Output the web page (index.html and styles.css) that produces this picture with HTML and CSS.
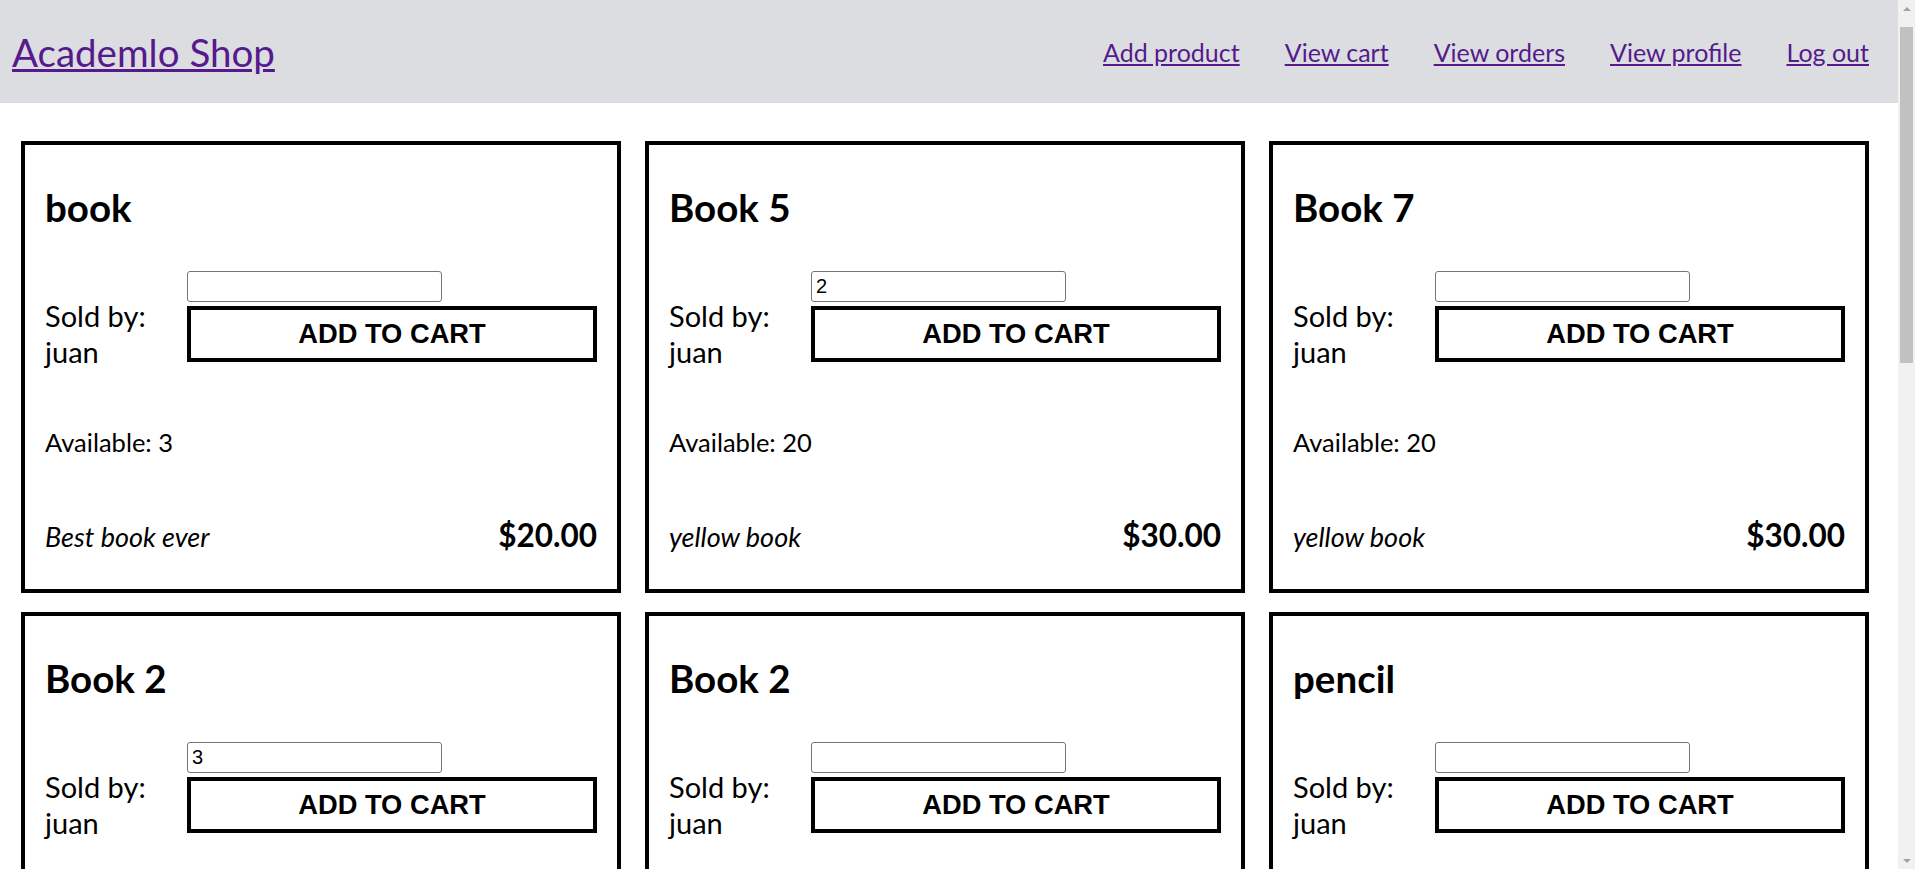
FILE: index.html
```html
<!DOCTYPE html>
<html lang="en">
<head>
<meta charset="utf-8">
<title>Academlo Shop</title>
<link rel="stylesheet" href="styles.css">
</head>
<body>
<div class="page">
  <header class="topbar">
    <a class="brand" href="#">Academlo Shop</a>
    <nav class="menu">
      <a href="#">Add product</a>
      <a href="#">View cart</a>
      <a href="#">View orders</a>
      <a href="#">View profile</a>
      <a href="#">Log out</a>
    </nav>
  </header>
  <main class="products">
    <article class="card">
      <h2 class="card-title">book</h2>
      <div class="buy">
        <p class="seller">Sold by: juan</p>
        <form class="buy-form"><input class="qty" type="text" value=""><button class="add-btn" type="button">ADD TO CART</button></form>
      </div>
      <p class="available">Available: 3</p>
      <div class="card-foot"><span class="desc">Best book ever</span><span class="price">$20.00</span></div>
    </article>
    <article class="card">
      <h2 class="card-title">Book 5</h2>
      <div class="buy">
        <p class="seller">Sold by: juan</p>
        <form class="buy-form"><input class="qty" type="text" value="2"><button class="add-btn" type="button">ADD TO CART</button></form>
      </div>
      <p class="available">Available: 20</p>
      <div class="card-foot"><span class="desc">yellow book</span><span class="price">$30.00</span></div>
    </article>
    <article class="card">
      <h2 class="card-title">Book 7</h2>
      <div class="buy">
        <p class="seller">Sold by: juan</p>
        <form class="buy-form"><input class="qty" type="text" value=""><button class="add-btn" type="button">ADD TO CART</button></form>
      </div>
      <p class="available">Available: 20</p>
      <div class="card-foot"><span class="desc">yellow book</span><span class="price">$30.00</span></div>
    </article>
    <article class="card">
      <h2 class="card-title">Book 2</h2>
      <div class="buy">
        <p class="seller">Sold by: juan</p>
        <form class="buy-form"><input class="qty" type="text" value="3"><button class="add-btn" type="button">ADD TO CART</button></form>
      </div>
      <p class="available">Available: 10</p>
      <div class="card-foot"><span class="desc">blue book</span><span class="price">$15.00</span></div>
    </article>
    <article class="card">
      <h2 class="card-title">Book 2</h2>
      <div class="buy">
        <p class="seller">Sold by: juan</p>
        <form class="buy-form"><input class="qty" type="text" value=""><button class="add-btn" type="button">ADD TO CART</button></form>
      </div>
      <p class="available">Available: 10</p>
      <div class="card-foot"><span class="desc">blue book</span><span class="price">$15.00</span></div>
    </article>
    <article class="card">
      <h2 class="card-title">pencil</h2>
      <div class="buy">
        <p class="seller">Sold by: juan</p>
        <form class="buy-form"><input class="qty" type="text" value=""><button class="add-btn" type="button">ADD TO CART</button></form>
      </div>
      <p class="available">Available: 50</p>
      <div class="card-foot"><span class="desc">black pencil</span><span class="price">$2.00</span></div>
    </article>
  </main>
</div>
<div class="scrollbar" aria-hidden="true">
  <div class="sb-btn sb-up"></div>
  <div class="sb-track"><div class="sb-thumb"></div></div>
  <div class="sb-btn sb-down"></div>
</div>
</body>
</html>
```

FILE: styles.css
```css
html {
  background: #fff;
}

body {
  margin: 0;
  height: 100vh;
  overflow: hidden;
  display: flex;
  font-family: "Source Sans Pro", Lato, "Noto Sans", sans-serif;
  font-size: 25.5px;
  color: #000;
}

.page {
  flex: 1;
  min-width: 0;
  height: 100vh;
  overflow: hidden;
}

/* scrollbar */
.scrollbar {
  width: 17px;
  flex-shrink: 0;
  background: #f1f1f1;
  display: flex;
  flex-direction: column;
}

.sb-btn {
  height: 17px;
  flex-shrink: 0;
  display: flex;
  align-items: center;
  justify-content: center;
}

.sb-up::before,
.sb-down::before {
  content: "";
  width: 0;
  height: 0;
  border-left: 4px solid transparent;
  border-right: 4px solid transparent;
}

.sb-up::before {
  border-bottom: 4px solid #a3a3a3;
}

.sb-down::before {
  border-top: 4px solid #a3a3a3;
}

.sb-track {
  flex: 1;
}

.sb-thumb {
  margin: 10px 2px 0;
  height: 336px;
  background: #c1c1c1;
}

a {
  color: #551a8b;
}

.topbar {
  height: 103px;
  background: #dcdde1;
  display: flex;
  align-items: center;
  justify-content: space-between;
  padding: 0 29px 0 12px;
}

.brand {
  font-size: 38.5px;
}

.menu {
  display: flex;
  gap: 45px;
  font-size: 25px;
}

.products {
  display: grid;
  grid-template-columns: repeat(3, 1fr);
  column-gap: 24px;
  row-gap: 19px;
  padding: 38px 29px 40px 21px;
}

.card {
  border: 4px solid #000;
  padding: 38px 20px 34px 20px;
  display: flex;
  flex-direction: column;
}

.card-title {
  margin: 0;
  font-size: 38.5px;
  line-height: 48px;
  font-weight: 700;
}

.buy {
  display: flex;
  margin-top: 40px;
}

.seller {
  width: 142px;
  flex-shrink: 0;
  margin: 27px 0 0;
  font-size: 29px;
  line-height: 36px;
}

.buy-form {
  flex: 1;
  display: flex;
  flex-direction: column;
  align-items: flex-start;
  gap: 4px;
}

.qty {
  box-sizing: border-box;
  width: 255px;
  height: 31px;
  margin: 0;
  border: 1px solid #767676;
  border-radius: 3px;
  padding: 1px 4px;
  font-family: "Liberation Sans", Arial, sans-serif;
  font-size: 20px;
  color: #000;
  background: #fff;
}

.add-btn {
  box-sizing: border-box;
  width: 100%;
  height: 56px;
  margin: 0;
  border: 4px solid #000;
  background: #fff;
  color: #000;
  font-family: "Liberation Sans", Arial, sans-serif;
  font-size: 27.3px;
  font-weight: 700;
  cursor: pointer;
}

.available {
  margin: 54px 0 0;
  line-height: 36px;
}

.card-foot {
  display: flex;
  justify-content: space-between;
  align-items: baseline;
  margin-top: 57px;
  line-height: 36px;
}

.desc {
  font-style: italic;
  font-size: 27px;
}

.price {
  font-size: 31.5px;
  font-weight: 700;
}
```
